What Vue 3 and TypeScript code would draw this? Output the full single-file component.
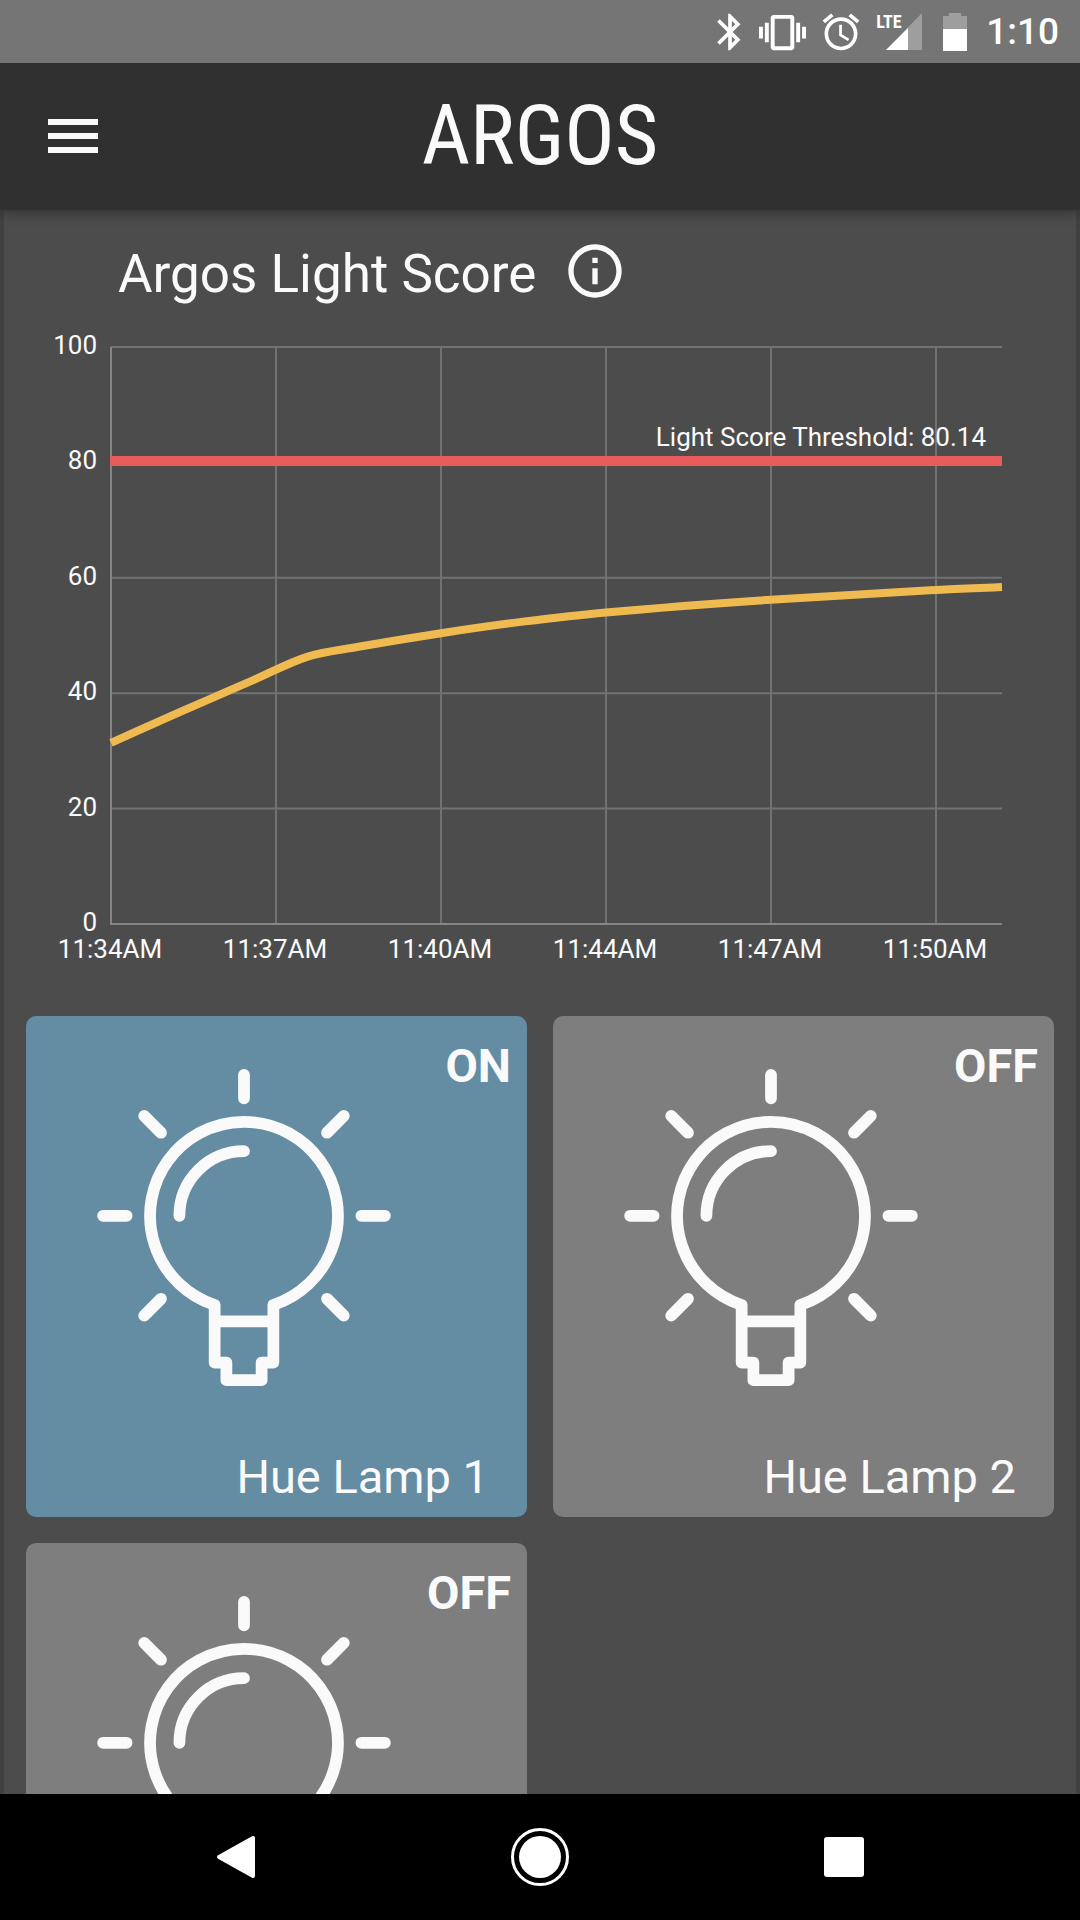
<script setup lang="ts">
import { ref } from 'vue'

interface Lamp {
  id: number
  name?: string
  on: boolean
}

const lamps = ref<Lamp[]>([
  { id: 1, name: 'Hue Lamp 1', on: true },
  { id: 2, name: 'Hue Lamp 2', on: false },
  { id: 3, on: false },
])

// Plot area inside the chart's own 1072 x 660 coordinate space
const plot = { left: 107, right: 998, top: 27, bottom: 604 }
const xStep = 165
const threshold = 80.14

const yTicks = [100, 80, 60, 40, 20, 0]
const xTicks = ['11:34AM', '11:37AM', '11:40AM', '11:44AM', '11:47AM', '11:50AM']

// [offset from the first tick, score]
const readings: [number, number][] = [
  [0, 31.4],
  [63, 36.3],
  [144, 42.4],
  [196, 46.3],
  [246, 48],
  [330, 50.4],
  [412, 52.4],
  [495, 54],
  [660, 56.2],
  [826, 57.9],
  [891, 58.4],
]

const scoreY = (score: number): number =>
  plot.bottom - (score / 100) * (plot.bottom - plot.top)

const limitY = Math.floor(scoreY(threshold))

// Catmull-Rom spline through the readings, as cubic segments
function smoothPath(data: [number, number][]): string {
  const pts = data.map(([x, s]) => [plot.left + x, scoreY(s)])
  let d = `M${pts[0][0]} ${pts[0][1]}`
  for (let i = 0; i < pts.length - 1; i++) {
    const p0 = pts[Math.max(i - 1, 0)]
    const p1 = pts[i]
    const p2 = pts[i + 1]
    const p3 = pts[Math.min(i + 2, pts.length - 1)]
    const span = p2[0] - p1[0]
    const m1 = (p2[1] - p0[1]) / (p2[0] - p0[0])
    const m2 = (p3[1] - p1[1]) / (p3[0] - p1[0])
    d += ` C${p1[0] + span / 3} ${p1[1] + (m1 * span) / 3}`
    d += ` ${p2[0] - span / 3} ${p2[1] - (m2 * span) / 3} ${p2[0]} ${p2[1]}`
  }
  return d
}

const scorePath = smoothPath(readings)
</script>

<template>
  <div class="screen">
    <div class="status">
      <svg class="s44 bt" viewBox="0 0 24 24"><path d="M17.71 7.71L12 2h-1v7.59L6.41 5 5 6.41 10.59 12 5 17.59 6.41 19 11 14.41V22h1l5.71-5.71-4.3-4.29 4.3-4.29zM13 5.83l1.88 1.88L13 9.59V5.83zm1.88 10.46L13 18.17v-3.76l1.88 1.88z" /></svg>
      <svg class="s47" viewBox="0 0 24 24"><path d="M0 15h2V9H0v6zm3 2h2V7H3v10zm19-8v6h2V9h-2zm-3 8h2V7h-2v10zM16.500 3h-9C6.670 3 6 3.670 6 4.500v15c0 .830.670 1.500 1.500 1.500h9c.830 0 1.500-.670 1.500-1.500v-15c0-.830-.670-1.500-1.500-1.500zM16 19H8V5h8v14z" /></svg>
      <svg class="s44 alarm" viewBox="0 0 24 24"><path d="M22 5.720l-4.600-3.860-1.290 1.530 4.600 3.860L22 5.720zM7.880 3.390L6.600 1.860 2 5.710l1.290 1.530 4.590-3.850zM12.500 8H11v6l4.750 2.850.750-1.230-4-2.370V8zM12 4c-4.970 0-9 4.030-9 9s4.020 9 9 9c4.970 0 9-4.030 9-9s-4.030-9-9-9zm0 16c-3.870 0-7-3.130-7-7s3.130-7 7-7 7 3.130 7 7-3.130 7-7 7z" /></svg>
      <div class="signal">
        <svg class="bars" viewBox="0 0 46 38">
          <path d="M10 37L46 0V37z" opacity=".3" />
          <path d="M10 37L32 15V37z" />
        </svg>
        <span class="lte">LTE</span>
      </div>
      <svg class="battery" viewBox="0 0 24 38">
        <path d="M0 3H6V0H18V3H24V16H0z" opacity=".3" />
        <path d="M0 16H24V38H0z" />
      </svg>
      <time class="clock">1:10</time>
    </div>

    <header class="bar">
      <button class="menu" type="button" aria-label="Menu">
        <svg viewBox="0 0 50 34"><path d="M0 0H50V6H0zM0 14H50V20H0zM0 28H50V34H0z" /></svg>
      </button>
      <h1 class="brand">ARGOS</h1>
    </header>

    <main class="content">
      <div class="heading">
        <h2>Argos Light Score</h2>
        <button class="info" type="button" aria-label="About the light score">
          <svg viewBox="0 0 24 24"><path d="M11 17h2v-6h-2v6zm1-15C6.480 2 2 6.480 2 12s4.480 10 10 10 10-4.480 10-10S17.520 2 12 2zm0 18c-4.410 0-8-3.590-8-8s3.590-8 8-8 8 3.590 8 8-3.590 8-8 8zM11 9h2V7h-2v2z" /></svg>
        </button>
      </div>

      <svg class="chart" viewBox="0 0 1072 660" role="img" aria-label="Light score over time">
        <g class="grid">
          <line v-for="t in yTicks" :key="t" :x1="plot.left" :x2="plot.right" :y1="scoreY(t)" :y2="scoreY(t)" />
          <line v-for="(t, i) in xTicks" :key="t" :x1="plot.left + i * xStep" :x2="plot.left + i * xStep" :y1="plot.top" :y2="plot.bottom" />
        </g>
        <path class="axis" :d="`M${plot.left} ${plot.top}V${plot.bottom}H${plot.right}`" />
        <text v-for="t in yTicks" :key="t" class="tick end" x="93" :y="scoreY(t) + 7">{{ t }}</text>
        <text v-for="(t, i) in xTicks" :key="t" class="tick mid" :x="plot.left - 1 + i * xStep" y="638">{{ t }}</text>
        <path class="score" :d="scorePath" />
        <line class="limit" :x1="plot.left - 1" :x2="plot.right" :y1="limitY" :y2="limitY" />
        <text class="tick end" x="982" y="126">Light Score Threshold: {{ threshold }}</text>
      </svg>

      <div class="lamps">
        <button
          v-for="lamp in lamps"
          :key="lamp.id"
          type="button"
          class="lamp"
          :class="{ on: lamp.on }"
          :aria-pressed="lamp.on"
          @click="lamp.on = !lamp.on"
        >
          <svg class="bulb" viewBox="-25 -25 50 54">
            <path d="M-5 15.200A16 16 0 1 1 5 15.200V25H3V28H-3V25H-5zM-5 18H5M-11 0A11 11 0 0 1 0 -11" />
            <path d="M0 -24V-20M-24 0H-20M20 0H24M-17 -17L-14.140 -14.140M17 -17L14.140 -14.140M-17 17L-14.140 14.140M17 17L14.140 14.140" />
          </svg>
          <span class="state">{{ lamp.on ? 'ON' : 'OFF' }}</span>
          <span v-if="lamp.name" class="name">{{ lamp.name }}</span>
        </button>
      </div>
    </main>

    <nav class="nav">
      <button type="button" aria-label="Back">
        <svg viewBox="0 0 60 60"><path class="round" d="M13 30L47 11V49z" /></svg>
      </button>
      <button type="button" aria-label="Home">
        <svg viewBox="0 0 60 60"><circle class="ring" cx="30" cy="30" r="27.500" /><circle cx="30" cy="30" r="21" /></svg>
      </button>
      <button type="button" aria-label="Recent apps">
        <svg viewBox="0 0 60 60"><rect x="10" y="10" width="40" height="40" rx="3" /></svg>
      </button>
    </nav>
  </div>
</template>

<style>
body {
  margin: 0;
  background: #4c4c4c;
}
</style>

<style scoped>
.screen {
  display: flex;
  flex-direction: column;
  height: 100vh;
  overflow: hidden;
  font-family: Roboto, "Liberation Sans", sans-serif;
  color: #fafafa;
}

button {
  padding: 0;
  border: 0;
  background: none;
  color: inherit;
  font: inherit;
  cursor: pointer;
}

svg {
  display: block;
  fill: currentColor;
}

.status {
  position: relative;
  z-index: 2;
  flex: none;
  box-sizing: border-box;
  display: flex;
  align-items: center;
  justify-content: flex-end;
  height: 63px;
  padding: 1px 21px 0 0;
  background: #757575;
  color: #fff;
}

.s44 {
  width: 44px;
  height: 44px;
}

.s47 {
  width: 47px;
  height: 47px;
}

.bt {
  margin-right: 7px;
}

.alarm {
  margin: 0 13px;
}

.signal {
  position: relative;
  margin-right: 21px;
}

.bars {
  width: 46px;
  height: 38px;
}

.lte {
  position: absolute;
  top: 0;
  left: 0;
  font: 700 18px/18px "Roboto Condensed", "Liberation Sans Narrow", Roboto, sans-serif;
}

.battery {
  width: 24px;
  height: 38px;
  margin-right: 19px;
}

.clock {
  font-size: 37px;
  font-weight: 500;
  line-height: 44px;
}

.bar {
  position: relative;
  z-index: 1;
  flex: none;
  box-sizing: border-box;
  display: grid;
  grid-template-columns: 1fr auto 1fr;
  align-items: center;
  height: 147px;
  padding: 0 48px 2px;
  background: #303030;
  box-shadow: 0 2px 12px rgba(0, 0, 0, 0.4);
}

.menu {
  justify-self: start;
}

.menu svg {
  width: 50px;
  height: 34px;
}

.brand {
  margin: 0;
  font: 400 84px/96px "Roboto Condensed", "Liberation Sans Narrow", Roboto, sans-serif;
}

.content {
  flex: 1;
  min-height: 0;
  overflow: hidden;
  padding-top: 29px;
  border: solid #414141;
  border-width: 0 4px;
  background: #4c4c4c;
}

.heading {
  display: flex;
  align-items: flex-start;
  gap: 27px;
  padding-left: 114px;
}

h2 {
  margin: 0;
  font-size: 53px;
  font-weight: 400;
  line-height: 70px;
}

.info svg {
  width: 64px;
  height: 64px;
}

.chart {
  width: 100%;
  margin-top: 11px;
}

.grid line {
  stroke: #727272;
  stroke-width: 2;
}

.axis {
  fill: none;
  stroke: #858585;
  stroke-width: 2;
}

.tick {
  font-size: 26px;
}

.end {
  text-anchor: end;
}

.mid {
  text-anchor: middle;
}

.score {
  fill: none;
  stroke: #efbb50;
  stroke-width: 8;
}

.limit {
  stroke: #e85c5c;
  stroke-width: 10;
}

.lamps {
  display: grid;
  grid-template-columns: 1fr 1fr;
  gap: 26px;
  padding: 36px 22px;
}

.lamp {
  display: grid;
  grid-template-columns: auto 1fr;
  grid-template-rows: 1fr auto;
  align-items: start;
  aspect-ratio: 1;
  padding: 22px 16px 12px 71px;
  border-radius: 10px;
  background: #7e7e7e;
  font-size: 47px;
  line-height: 56px;
}

.lamp.on {
  background: #648da3;
}

.bulb {
  width: 294px;
  height: 317px;
  margin-top: 31px;
  fill: none;
  stroke: currentColor;
  stroke-width: 2;
  stroke-linecap: round;
  stroke-linejoin: round;
}

.state {
  justify-self: end;
  font-weight: 700;
}

.name {
  grid-column: 1 / -1;
  justify-self: end;
  padding-right: 22px;
}

.nav {
  flex: none;
  display: grid;
  grid-template-columns: repeat(3, 1fr);
  place-items: center;
  height: 126px;
  padding: 0 84px;
  background: #000;
  color: #fff;
}

.nav svg {
  width: 60px;
  height: 60px;
}

.round {
  stroke: #fff;
  stroke-width: 4;
  stroke-linejoin: round;
}

.ring {
  fill: none;
  stroke: #fff;
  stroke-width: 3;
}
</style>
